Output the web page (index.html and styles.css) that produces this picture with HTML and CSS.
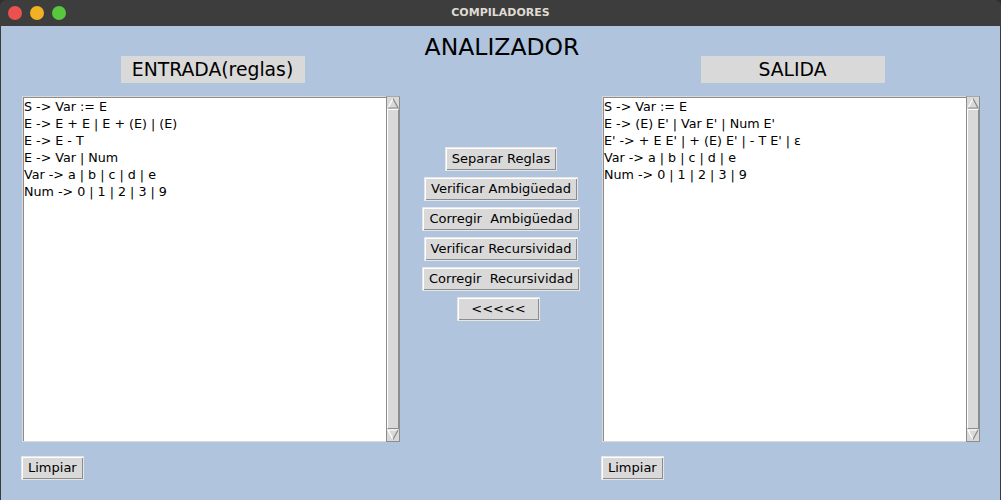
FILE: index.html
```html
<!DOCTYPE html>
<html lang="es">
<head>
<meta charset="utf-8">
<title>COMPILADORES</title>
<link rel="stylesheet" href="styles.css">
</head>
<body>
<div class="window">
  <div class="titlebar">
    <div class="lights">
      <span class="light red"></span>
      <span class="light yellow"></span>
      <span class="light green"></span>
    </div>
    <div class="title">COMPILADORES</div>
  </div>
  <div class="content">
    <div class="cell-label"><div class="label">ENTRADA(reglas)</div></div>
    <div class="cell-heading"><h1 class="heading">ANALIZADOR</h1></div>
    <div class="cell-label"><div class="label">SALIDA</div></div>

    <div class="textbox">
      <div class="text">
        <div class="line">S -&gt; Var := E</div>
        <div class="line">E -&gt; E + E | E + (E) | (E)</div>
        <div class="line">E -&gt; E - T</div>
        <div class="line">E -&gt; Var | Num</div>
        <div class="line">Var -&gt; a | b | c | d | e</div>
        <div class="line">Num -&gt; 0 | 1 | 2 | 3 | 9</div>
      </div>
      <div class="scrollbar">
        <div class="arrow"><svg width="12" height="12" viewBox="0 0 12 12"><polygon points="6,1.5 11,11 1,11" fill="#d9d9d9"/><polyline points="1,11 6,1.5" fill="none" stroke="#ffffff" stroke-width="1.2"/><polyline points="6,1.5 11,11 1,11" fill="none" stroke="#8a8a8a" stroke-width="1.2"/></svg></div>
        <div class="slider"></div>
        <div class="arrow"><svg width="12" height="12" viewBox="0 0 12 12"><polygon points="1,1 11,1 6,10.5" fill="#d9d9d9"/><polyline points="11,1 1,1 6,10.5" fill="none" stroke="#ffffff" stroke-width="1.2"/><polyline points="11,1 6,10.5" fill="none" stroke="#8a8a8a" stroke-width="1.2"/></svg></div>
      </div>
    </div>

    <div class="actions">
      <button class="btn">Separar Reglas</button>
      <button class="btn">Verificar Ambigüedad</button>
      <button class="btn">Corregir  Ambigüedad</button>
      <button class="btn">Verificar Recursividad</button>
      <button class="btn">Corregir  Recursividad</button>
      <button class="btn btn-wide">&lt;&lt;&lt;&lt;&lt;</button>
    </div>

    <div class="textbox">
      <div class="text">
        <div class="line">S -&gt; Var := E</div>
        <div class="line">E -&gt; (E) E' | Var E' | Num E'</div>
        <div class="line">E' -&gt; + E E' | + (E) E' | - T E' | ε</div>
        <div class="line">Var -&gt; a | b | c | d | e</div>
        <div class="line">Num -&gt; 0 | 1 | 2 | 3 | 9</div>
      </div>
      <div class="scrollbar">
        <div class="arrow"><svg width="12" height="12" viewBox="0 0 12 12"><polygon points="6,1.5 11,11 1,11" fill="#d9d9d9"/><polyline points="1,11 6,1.5" fill="none" stroke="#ffffff" stroke-width="1.2"/><polyline points="6,1.5 11,11 1,11" fill="none" stroke="#8a8a8a" stroke-width="1.2"/></svg></div>
        <div class="slider"></div>
        <div class="arrow"><svg width="12" height="12" viewBox="0 0 12 12"><polygon points="1,1 11,1 6,10.5" fill="#d9d9d9"/><polyline points="11,1 1,1 6,10.5" fill="none" stroke="#ffffff" stroke-width="1.2"/><polyline points="11,1 6,10.5" fill="none" stroke="#8a8a8a" stroke-width="1.2"/></svg></div>
      </div>
    </div>

    <div class="cell-bottom"><button class="btn">Limpiar</button></div>
    <div></div>
    <div class="cell-bottom"><button class="btn">Limpiar</button></div>
  </div>
</div>
</body>
</html>
```
FILE: styles.css
```css
* { box-sizing: border-box; }
html, body { margin: 0; padding: 0; background: #2e2e2e; }
body { font-family: "DejaVu Sans", sans-serif; }

.window {
  width: 1001px;
  height: 500px;
  display: flex;
  flex-direction: column;
  overflow: hidden;
}

.titlebar {
  height: 26px;
  flex: 0 0 26px;
  background: #3d3d3d;
  border-radius: 6px 6px 0 0;
  display: flex;
  align-items: center;
  position: relative;
}
.lights {
  display: flex;
  gap: 8px;
  padding-left: 8px;
}
.light {
  width: 14px;
  height: 14px;
  border-radius: 50%;
  display: block;
}
.red { background: #ec5150; }
.yellow { background: #f0b125; }
.green { background: #56c73e; }
.title {
  position: absolute;
  left: 0;
  right: 0;
  top: 0;
  height: 26px;
  line-height: 26px;
  text-align: center;
  color: #dfdbd2;
  font-weight: bold;
  font-size: 11px;
}

.content {
  flex: 1;
  background: #b0c4de;
  border-left: 1px solid #3a3a3a;
  border-right: 1px solid #3a3a3a;
  display: grid;
  grid-template-columns: 378px 202px 378px;
  grid-template-rows: 70px 346px auto;
  padding-left: 21px;
}

.cell-label {
  display: flex;
  justify-content: center;
  padding-top: 30px;
  padding-left: 3px;
}
.label {
  width: 184px;
  height: 27px;
  background: #d9d9d9;
  font-size: 18.8px;
  line-height: 27px;
  text-align: center;
  color: #000;
}
.cell-heading {
  display: flex;
  justify-content: center;
}
.heading {
  margin: 7px 0 0 2px;
  font-size: 23.5px;
  font-weight: normal;
  line-height: 28px;
  color: #000;
}

.textbox {
  display: flex;
  height: 346px;
}
.text {
  flex: 1;
  background: #fff;
  border: 1px solid #d9d9d9;
  border-right: none;
  box-shadow: inset 1px 1px 0 #8c8c8c;
  padding: 1px 1px;
  font-size: 12.7px;
  line-height: 17px;
  color: #000;
}
.line { white-space: pre; }
.scrollbar {
  width: 14px;
  display: flex;
  flex-direction: column;
  background: #c3c3c3;
  border: 1px solid #8c8c8c;
  border-top-color: #a8a8a8;
}
.arrow {
  height: 12px;
  flex: 0 0 12px;
  display: flex;
  background: #d9d9d9;
}
.arrow svg { display: block; }
.slider {
  flex: 1;
  background: #d9d9d9;
  border-top: 1px solid #fff;
  border-left: 1px solid #fff;
  border-bottom: 1px solid #8c8c8c;
  border-right: 1px solid #8c8c8c;
}

.actions {
  display: flex;
  flex-direction: column;
  align-items: center;
  gap: 6px;
  padding-top: 51px;
}

.btn {
  font-family: "DejaVu Sans", sans-serif;
  font-size: 13px;
  line-height: 16px;
  height: 24px;
  padding: 0 6px;
  margin: 0;
  background: #d9d9d9;
  color: #000;
  border: 1px solid #e6e6e6;
  box-shadow: inset 1px 1px 0 #ffffff, inset -1px -1px 0 #8c8c8c;
  white-space: pre;
  border-radius: 0;
}
.btn-wide {
  width: 83px;
  margin-right: 5px;
}

.cell-bottom {
  padding-top: 14px;
  margin-left: -1px;
}
```
